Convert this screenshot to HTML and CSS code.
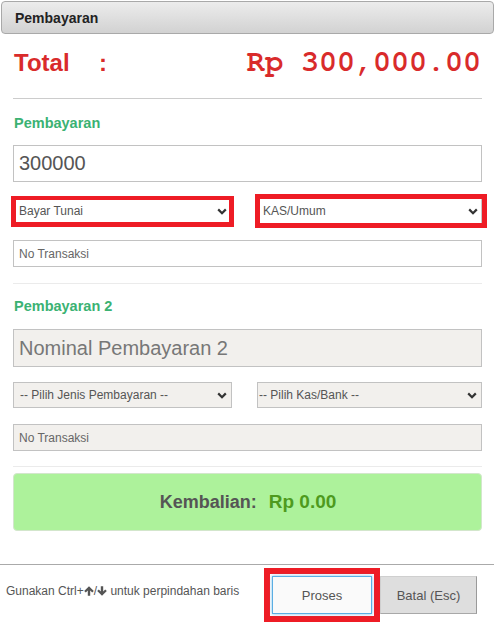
FILE: index.html
```html
<!DOCTYPE html>
<html lang="id">
<head>
<meta charset="utf-8">
<title>Pembayaran</title>
<link rel="stylesheet" href="styles.css">
</head>
<body>
<div class="panel">
  <div class="panel-head">Pembayaran</div>
  <div class="panel-body">
    <div class="total-row">
      <span class="total-label">Total</span>
      <span class="total-colon">:</span>
      <span class="total-amount">Rp 300,000.00</span>
    </div>
    <div class="rule rule-total"></div>

    <div class="section-title title-1">Pembayaran</div>
    <input class="field field-big field-1" type="text" value="300000">
    <div class="select-row row-1">
      <div class="hl hl-left">
        <div class="select select-plain">
          <span>Bayar Tunai</span>
          <svg class="chev" width="10" height="7" viewBox="0 0 10 7"><path d="M1.2 1.4 L5 5.2 L8.8 1.4" fill="none" stroke="#333" stroke-width="2.2"/></svg>
        </div>
      </div>
      <div class="hl hl-right">
        <div class="select select-plain select-plain-r">
          <span>KAS/Umum</span>
          <svg class="chev" width="10" height="7" viewBox="0 0 10 7"><path d="M1.2 1.4 L5 5.2 L8.8 1.4" fill="none" stroke="#333" stroke-width="2.2"/></svg>
        </div>
      </div>
    </div>
    <input class="field field-small field-trx1" type="text" placeholder="No Transaksi">
    <div class="rule rule-light rule-mid"></div>

    <div class="section-title title-2">Pembayaran 2</div>
    <input class="field field-big field-muted field-nom" type="text" placeholder="Nominal Pembayaran 2">
    <div class="select-row row-2">
      <div class="select select-muted">
        <span>-- Pilih Jenis Pembayaran --</span>
        <svg class="chev" width="10" height="7" viewBox="0 0 10 7"><path d="M1.2 1.4 L5 5.2 L8.8 1.4" fill="none" stroke="#333" stroke-width="2.2"/></svg>
      </div>
      <div class="select select-muted select-r2">
        <span>-- Pilih Kas/Bank --</span>
        <svg class="chev" width="10" height="7" viewBox="0 0 10 7"><path d="M1.2 1.4 L5 5.2 L8.8 1.4" fill="none" stroke="#333" stroke-width="2.2"/></svg>
      </div>
    </div>
    <input class="field field-small field-muted field-trx2" type="text" placeholder="No Transaksi">
    <div class="rule rule-light rule-end"></div>

    <div class="change-box">
      <span class="change-line"><span class="change-label">Kembalian:</span><span class="change-value">Rp 0.00</span></span>
    </div>
  </div>

  <div class="footer">
    <div class="hint">Gunakan Ctrl+<svg class="arrow" width="10" height="10" viewBox="0 0 10 10"><path d="M5 0.2 L9.8 5 L8.2 6.6 L6.2 4.6 V9.8 H3.8 V4.6 L1.8 6.6 L0.2 5 Z" fill="#555"/></svg>/<svg class="arrow" width="10" height="10" viewBox="0 0 10 10"><path d="M5 9.8 L9.8 5 L8.2 3.4 L6.2 5.4 V0.2 H3.8 V5.4 L1.8 3.4 L0.2 5 Z" fill="#555"/></svg> untuk perpindahan baris</div>
    <div class="actions">
      <div class="hl-btn">
        <button class="btn btn-primary" type="button">Proses</button>
      </div>
      <button class="btn btn-cancel" type="button">Batal (Esc)</button>
    </div>
  </div>
</div>
</body>
</html>
```
FILE: styles.css
```css
html, body {
  margin: 0;
  padding: 0;
  background: #ffffff;
}

body {
  font-family: "Liberation Sans", Arial, sans-serif;
  color: #555555;
}

.panel {
  width: 497px;
}

.panel-head {
  box-sizing: border-box;
  margin: 1px 3px 0 1px;
  height: 33px;
  padding-left: 13px;
  display: flex;
  align-items: center;
  border: 1px solid #a9a9a9;
  border-radius: 4px;
  background: linear-gradient(#ececec, #d2d2d2);
  font-weight: bold;
  font-size: 14px;
  color: #222222;
}

.panel-body {
  padding: 0 15px 0 13px;
}

/* Total */
.total-row {
  margin-top: 13px;
  height: 30px;
  display: flex;
  align-items: baseline;
  line-height: 30px;
  color: #d92b2b;
}

.total-label {
  width: 86px;
  padding-left: 1px;
  box-sizing: border-box;
  font-size: 24px;
  font-weight: bold;
}

.total-colon {
  font-size: 24px;
  font-weight: bold;
}

.total-amount {
  margin-left: auto;
  margin-right: 1px;
  font-family: "Nimbus Mono PS", "Nimbus Mono L", "FreeMono", "Courier 10 Pitch", "Courier", "Courier New", "Liberation Mono", monospace;
  font-weight: bold;
  font-size: 30px;
}

.rule {
  height: 0;
  border-top: 1px solid #cccccc;
}

.rule-total {
  margin-top: 21px;
}

.rule-light {
  border-top-color: #ebebeb;
}

.rule-mid {
  margin-top: 16px;
}

.rule-end {
  margin-top: 15px;
}

.section-title {
  font-size: 14.5px;
  line-height: 17px;
  font-weight: bold;
  color: #3bb273;
  padding-left: 1px;
}

.title-1 {
  margin-top: 16px;
}

.title-2 {
  margin-top: 14px;
}

/* Inputs */
.field {
  display: block;
  box-sizing: border-box;
  width: 100%;
  margin: 0;
  border: 1px solid #c2c2c2;
  border-radius: 0;
  background: #ffffff;
  padding: 0 5px;
  font-family: "Liberation Sans", Arial, sans-serif;
  color: #555555;
  outline: none;
}

.field::placeholder {
  color: #666666;
  opacity: 1;
}

.field-big {
  font-size: 20px;
}

.field-small {
  font-size: 12px;
  height: 27px;
}

.field-muted {
  background: #f2f0ed;
}

.field-muted.field-big::placeholder {
  color: #777777;
}

.field-1 {
  margin-top: 13px;
  height: 37px;
}

.field-trx1 {
  margin-top: 12px;
}

.field-nom {
  margin-top: 14px;
  height: 38px;
}

.field-trx2 {
  margin-top: 16px;
}

/* Selects */
.select-row {
  display: grid;
  grid-template-columns: 219px 225px;
  column-gap: 25px;
}

.row-1 {
  margin-top: 12px;
  align-items: start;
}

.row-2 {
  margin-top: 15px;
}

.select {
  box-sizing: border-box;
  display: flex;
  align-items: center;
  justify-content: space-between;
  font-size: 12px;
  color: #555555;
}

.select-muted {
  height: 26px;
  border: 1px solid #c2c2c2;
  background: #f2f0ed;
  padding: 0 4px 0 6px;
}

.select-r2 {
  padding-left: 1px;
}

.chev {
  display: block;
  flex: none;
}

.hl {
  box-sizing: border-box;
  border: 5px solid #ee1c25;
}

.hl-left {
  margin: 2px -2px 0 -2px;
  height: 31px;
  border-top-width: 4px;
}

.hl-right {
  margin: 0 -5px 0 -2px;
  height: 34px;
}

.select-plain {
  height: 100%;
  background: #ffffff;
  padding: 0 2px 0 3px;
}

.select-plain-r {
  padding-right: 3px;
  border-right: 1px solid #c8c8c8;
}

/* Change */
.change-box {
  box-sizing: border-box;
  margin-top: 6px;
  height: 58px;
  border: 1px solid #d3e6cc;
  border-radius: 4px;
  background: #adf29b;
  display: flex;
  align-items: center;
  justify-content: center;
}

.change-line {
  display: flex;
  align-items: baseline;
  line-height: 24px;
  font-weight: bold;
  margin-left: 1px;
}

.change-label {
  font-size: 18px;
  color: #555555;
}

.change-value {
  margin-left: 12px;
  font-size: 19px;
  color: #4e9a1e;
}

/* Footer */
.footer {
  margin: 33px 3px 0 0;
  border-top: 1px solid #aaaaaa;
  padding: 3px 17px 0 6px;
  display: flex;
  align-items: flex-start;
}

.hint {
  margin-top: 16px;
  font-size: 12px;
  line-height: 14px;
  color: #555555;
  white-space: nowrap;
}

.arrow {
  vertical-align: -1px;
}

.actions {
  margin-left: auto;
  display: flex;
  align-items: flex-start;
}

.hl-btn {
  border: 6px solid #ee1c25;
  padding: 2px;
  background: #ffffff;
}

.btn {
  box-sizing: border-box;
  display: block;
  height: 38px;
  margin: 0;
  padding: 0;
  font-family: "Liberation Sans", Arial, sans-serif;
  font-size: 13px;
  color: #555555;
  border-radius: 0;
  cursor: pointer;
}

.btn-primary {
  width: 100px;
  background: #fafafa;
  border: 1px solid #5aaee3;
  box-shadow: 0 0 3px rgba(90, 174, 227, 0.8);
}

.btn-cancel {
  margin-top: 8px;
  width: 97px;
  background: #dedede;
  border: 1px solid #cfcfcf;
  border-right-color: #9a9a9a;
  border-bottom-color: #a8a8a8;
}
```
